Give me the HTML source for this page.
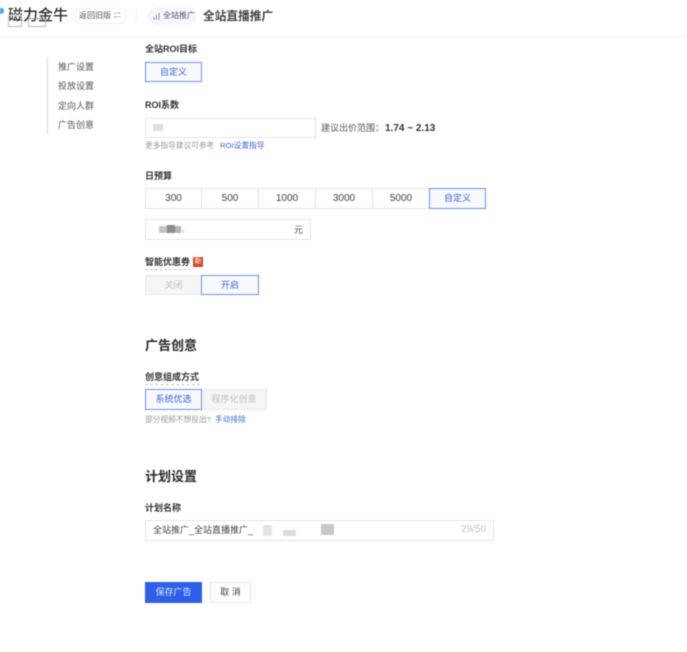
<!DOCTYPE html>
<html lang="zh"><head><meta charset="utf-8"><style>
html,body{margin:0;padding:0;background:#fff}
#p{position:relative;width:687px;height:652px;overflow:hidden;background:#fff;font-family:"Liberation Sans","Noto Sans CJK SC",sans-serif;color:#333;filter:blur(.5px)}
#p div{position:absolute;box-sizing:border-box;white-space:nowrap}
.t{line-height:14px;height:14px}
.l{font-size:9px;font-weight:700;color:#333;left:145px}
.h{font-size:13px;font-weight:700;color:#2a2a2a;left:145px}
.s{font-size:7.700px;color:#999}
.n{font-size:9px;color:#555;left:58px}
.b{border:1px solid #e4e4e8;text-align:center;font-size:9px;color:#444;background:#fff}
.num{font-size:10px}
.on{border:1px solid #6f90e2;color:#3d66d2;background:#f7f9fe}
.g{background:#f5f5f6;color:#c2c2c2;border:1px solid #e8e8ea}
.i{border:1px solid #e4e4e8;background:#fff}
.bl{background:#c4c4c8}
</style></head><body><div id="p">
<div style="left:0;top:36px;width:687px;height:1px;background:#eeeef0"></div>
<div style="left:0;top:8px;width:4px;height:6px;background:#3ba7e8;border-radius:0 3px 3px 0"></div>
<div class="t" style="left:8px;top:6px;height:20px;line-height:20px;font-size:15px;color:#2a2a2a;font-weight:500">磁力金牛</div>
<div style="left:8px;top:15px;width:14px;height:12px;border:1px solid #a9bbd6;border-top-color:#fff"></div>
<div style="left:28px;top:18px;width:18px;height:9px;border:1px solid #a9bbd6;border-top-color:#999"></div>
<div style="left:73px;top:8px;width:54px;height:16px;border:1px solid #f0f0f3;border-radius:8px"></div>
<div class="t" style="left:79px;top:8px;font-size:8px;color:#555;line-height:16px;height:16px">返回旧版</div>
<div class="t" style="left:113px;top:8px;font-size:8px;color:#999;line-height:16px;height:16px">⇌</div>
<div style="left:136px;top:8px;width:1px;height:14px;background:#f2f2f4"></div>
<div style="left:148px;top:7px;width:49px;height:18px;background:#f4f6fc;border-radius:9px"></div>
<svg style="position:absolute;left:153px;top:13px" width="8" height="7" viewBox="0 0 8 7"><path d="M1 7V4M3.500 7V2M6 7V0" stroke="#8a94b0" stroke-width="1"/></svg>
<div class="t" style="left:163px;top:8px;font-size:8px;color:#555;line-height:16px;height:16px">全站推广</div>
<div class="t" style="left:203px;top:9px;font-size:11.700px;color:#444;font-weight:700;line-height:16px;height:16px">全站直播推广</div>

<div style="left:47px;top:57px;width:1px;height:77px;background:#d8d8dc"></div>
<div class="t n" style="top:60px">推广设置</div>
<div class="t n" style="top:79px">投放设置</div>
<div class="t n" style="top:99px">定向人群</div>
<div class="t n" style="top:118px">广告创意</div>

<div class="t l" style="top:42px">全站ROI目标</div>
<div class="b on" style="left:145px;top:62px;width:57px;height:20px;line-height:18px">自定义</div>

<div class="t l" style="top:98px">ROI系数</div>
<div class="i" style="left:145px;top:118px;width:171px;height:20px"></div>
<div class="bl" style="left:153px;top:124px;width:10px;height:7px;background:#dedee0"></div>
<div class="t" style="left:321px;top:121px;font-size:9px;color:#555">建议出价范围：</div>
<div class="t" style="left:385px;top:122px;font-size:10px;font-weight:700;color:#333">1.74 ~ 2.13</div>
<div class="t s" style="left:145px;top:139px">更多指导建议可参考</div>
<div class="t s" style="left:220px;top:139px;color:#3d66d2">ROI设置指导</div>

<div class="t l" style="top:169px">日预算</div>
<div class="b num" style="left:145px;top:188px;width:57px;height:21px;line-height:19px">300</div>
<div class="b num" style="left:201px;top:188px;width:58px;height:21px;line-height:19px">500</div>
<div class="b num" style="left:258px;top:188px;width:58px;height:21px;line-height:19px">1000</div>
<div class="b num" style="left:315px;top:188px;width:58px;height:21px;line-height:19px">3000</div>
<div class="b num" style="left:372px;top:188px;width:58px;height:21px;line-height:19px">5000</div>
<div class="b on" style="left:429px;top:188px;width:57px;height:21px;line-height:19px">自定义</div>
<div class="i" style="left:145px;top:219px;width:166px;height:21px"></div>
<div class="bl" style="left:159px;top:226px;width:8px;height:7px;background:#c4c4c8"></div>
<div class="bl" style="left:167px;top:225px;width:8px;height:8px;background:#8c8c90"></div>
<div class="bl" style="left:175px;top:226px;width:6px;height:7px;background:#b4b4b8"></div>
<div class="bl" style="left:182px;top:230px;width:2px;height:3px;background:#d8d8da"></div>
<div class="t" style="left:294px;top:223px;font-size:9px;color:#555">元</div>

<div class="t l" style="top:255px">智能优惠券</div>
<div style="left:145px;top:269px;width:46px;height:0;border-top:1px dashed #c4c4c4"></div>
<div style="left:193px;top:257px;width:10px;height:10px;background:#d4442e;color:#fff;font-size:7px;line-height:10px;text-align:center">新</div>
<div class="b g" style="left:145px;top:275px;width:57px;height:20px;line-height:18px">关闭</div>
<div class="b on" style="left:201px;top:275px;width:58px;height:20px;line-height:18px">开启</div>

<div class="t h" style="top:339px">广告创意</div>
<div class="t l" style="top:370px">创意组成方式</div>
<div style="left:145px;top:384px;width:55px;height:0;border-top:1px dashed #c4c4c4"></div>
<div class="b g" style="left:201px;top:389px;width:66px;height:21px;line-height:19px">程序化创意</div>
<div class="b on" style="left:145px;top:389px;width:57px;height:21px;line-height:19px">系统优选</div>
<div class="t s" style="left:145px;top:413px">部分视频不想投出?</div>
<div class="t s" style="left:215px;top:413px;color:#3d66d2">手动排除</div>

<div class="t h" style="top:470px">计划设置</div>
<div class="t l" style="top:501px">计划名称</div>
<div class="i" style="left:145px;top:520px;width:349px;height:21px"></div>
<div class="t" style="left:153px;top:523px;font-size:9px;color:#444">全站推广_全站直播推广_</div>
<div class="bl" style="left:263px;top:525px;width:9px;height:11px;background:#e4e4e6"></div>
<div class="bl" style="left:283px;top:530px;width:13px;height:6px;background:#dcdcde"></div>
<div class="bl" style="left:321px;top:524px;width:13px;height:11px;background:#c8c8ca"></div>
<div class="t" style="left:461px;top:523px;font-size:10px;color:#c4c4c4">29/50</div>

<div style="left:145px;top:582px;width:57px;height:21px;background:#2f5fe6;color:#dfe6fb;font-size:9px;line-height:21px;text-align:center">保存广告</div>
<div class="b" style="left:210px;top:582px;width:41px;height:21px;line-height:19px">取 消</div>
</div></body></html>
